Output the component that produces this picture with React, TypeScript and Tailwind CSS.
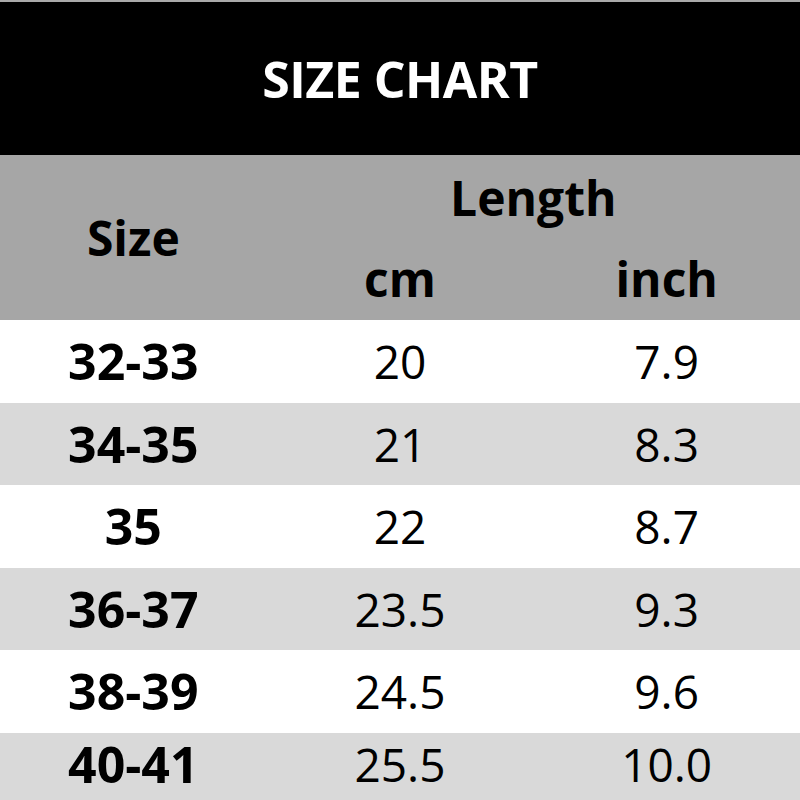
const rows = [
  { size: "32-33", cm: "20", inch: "7.9" },
  { size: "34-35", cm: "21", inch: "8.3" },
  { size: "35", cm: "22", inch: "8.7" },
  { size: "36-37", cm: "23.5", inch: "9.3" },
  { size: "38-39", cm: "24.5", inch: "9.6" },
  { size: "40-41", cm: "25.5", inch: "10.0" },
];

export default function App() {
  return (
    <div className="w-[800px] h-[800px] overflow-hidden bg-white text-black font-['Open_Sans',sans-serif] flex flex-col">
      <div className="h-[155px] shrink-0 bg-black border-t-2 border-[#a9a9a9] flex items-center justify-center">
        <h1 className="text-[50px] font-bold text-white leading-none tracking-[-0.5px]">SIZE CHART</h1>
      </div>

      <div className="grid grid-cols-3 grid-rows-[82.5px_82.5px] shrink-0 bg-[#a6a6a6] font-bold text-[48px] leading-none">
        <div className="row-span-2 flex items-center justify-center">Size</div>
        <div className="col-span-2 flex items-center justify-center pt-1">Length</div>
        <div className="flex items-center justify-center">cm</div>
        <div className="flex items-center justify-center">inch</div>
      </div>

      {rows.map((r, i) => (
        <div
          key={r.size}
          className={`grid grid-cols-3 items-center text-center leading-none ${i === rows.length - 1 ? "flex-1 pb-1" : "h-[82.5px] shrink-0"} ${i % 2 ? "bg-[#d9d9d9]" : "bg-white"}`}
        >
          <div className="text-[50px] font-bold">{r.size}</div>
          <div className="text-[46px]">{r.cm}</div>
          <div className="text-[46px]">{r.inch}</div>
        </div>
      ))}
    </div>
  );
}
